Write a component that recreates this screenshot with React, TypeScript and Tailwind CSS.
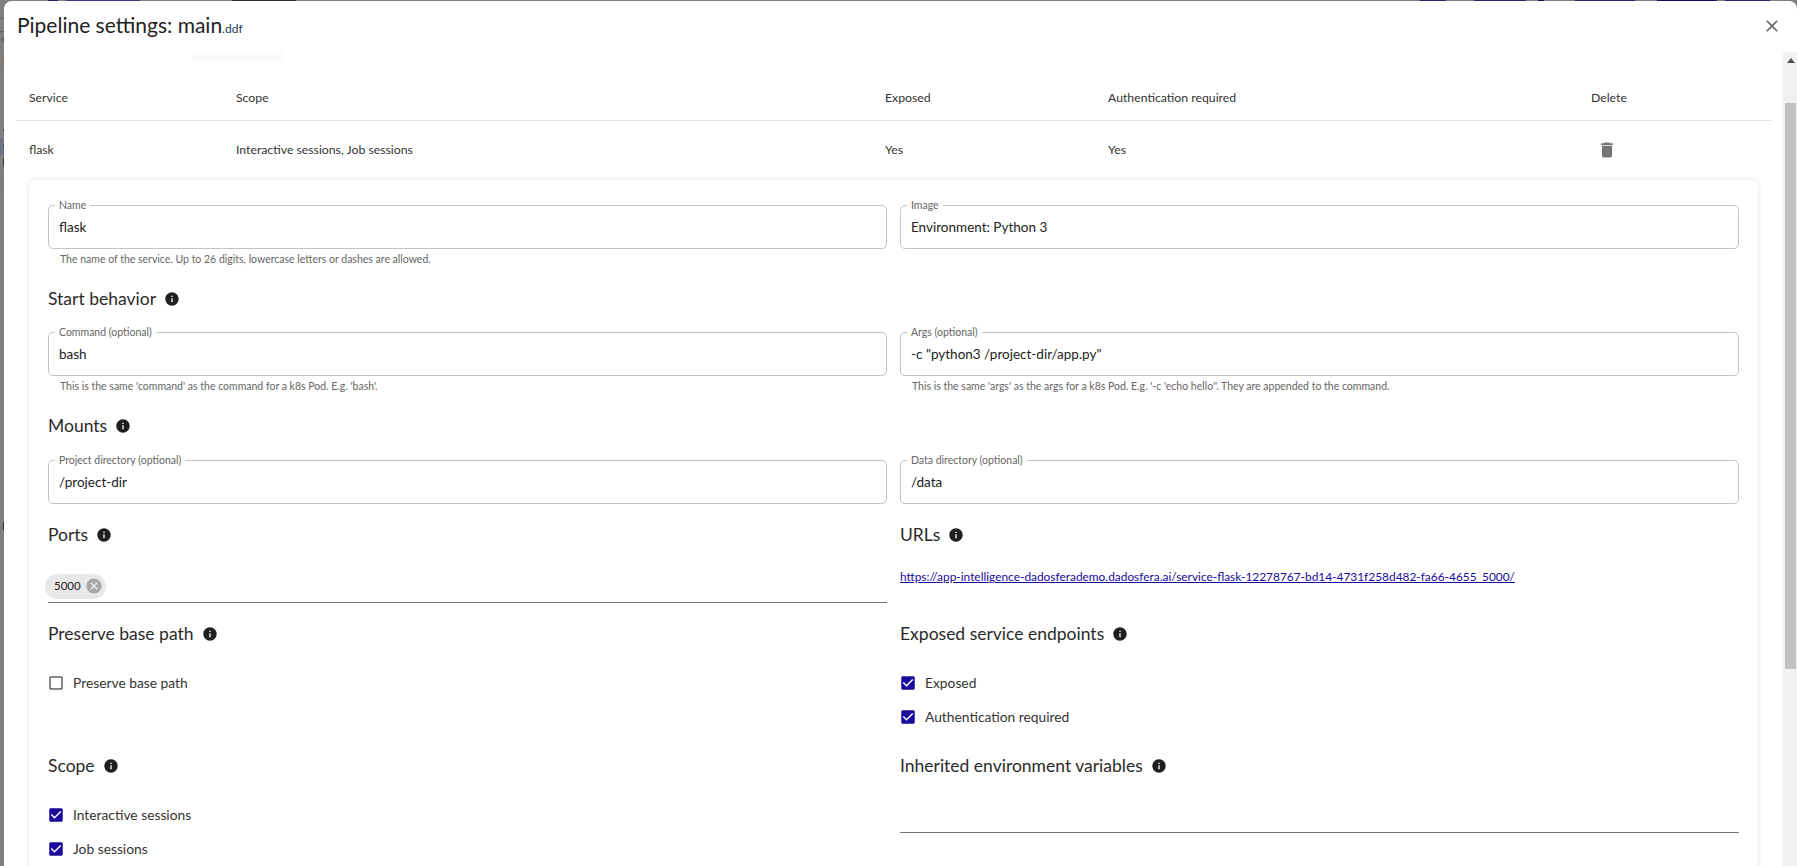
const info = "M12 2C6.48 2 2 6.48 2 12s4.48 10 10 10 10-4.48 10-10S17.52 2 12 2zm1 15h-2v-6h2v6zm0-8h-2V7h2v2z"
const checked = "M19 3H5c-1.11 0-2 .9-2 2v14c0 1.1.89 2 2 2h14c1.1 0 2-.9 2-2V5c0-1.1-.9-2-2-2zm-9 14l-5-5 1.41-1.41L10 14.17l7.59-7.59L19 8l-9 9z"
const blank = "M19 5v14H5V5h14m0-2H5c-1.1 0-2 .9-2 2v14c0 1.1.9 2 2 2h14c1.1 0 2-.9 2-2V5c0-1.1-.9-2-2-2z"

// bits of the page behind the modal that still show round its edge
const behind = [
  { x: 0, y: 18, w: 4, h: 1, c: "#6a6a6a" },
  { x: 0, y: 31, w: 4, h: 1, c: "#5f5f5f" },
  { x: 1, y: 37, w: 3, h: 5, c: "#6a6a6a" },
  { x: 3, y: 58, w: 1, h: 8, c: "#96703f" },
  { x: 3, y: 129, w: 1, h: 2, c: "#3c3c3c" },
  { x: 0, y: 138, w: 4, h: 17, c: "#6f7480" },
  { x: 3, y: 144, w: 1, h: 4, c: "#2f4f7a" },
  { x: 3, y: 158, w: 1, h: 8, c: "#3a3a3a" },
  { x: 3, y: 183, w: 1, h: 2, c: "#8a4a3a" },
  { x: 3, y: 522, w: 1, h: 8, c: "#2a2a2a" },
  { x: 48, y: 0, w: 10, h: 1, c: "#24206e" },
  { x: 66, y: 0, w: 74, h: 1, c: "#3a3a8a" },
  { x: 232, y: 0, w: 64, h: 1, c: "#303030" },
  { x: 1420, y: 0, w: 26, h: 1, c: "#2a2570" },
  { x: 1474, y: 0, w: 52, h: 1, c: "#2a2570" },
  { x: 1538, y: 0, w: 6, h: 1, c: "#14106a" },
  { x: 1575, y: 0, w: 60, h: 1, c: "#2a2570" },
  { x: 1657, y: 0, w: 60, h: 1, c: "#14106a" },
  { x: 1725, y: 0, w: 45, h: 1, c: "#2a2570" },
]

function Field({ label, value, helper }: { label: string; value: string; helper?: string }) {
  return (
    <div>
      <div className="relative flex h-[44px] items-center rounded-[5px] border border-[#c4c4c4] pl-[10px] text-[13.5px] text-[#222]">
        <span className="absolute left-[6px] top-[-7px] bg-white px-[4px] text-[10.5px] leading-[13px] text-[#666]">{label}</span>
        {value}
      </div>
      {helper && <p className="mt-[4px] pl-[12px] text-[10.5px] leading-[13px] text-[#666]">{helper}</p>}
    </div>
  )
}

function Heading({ children, className }: { children: string; className?: string }) {
  return (
    <div className={"flex h-[28px] items-center gap-[8px] text-[17.5px] text-[#2a2a2a] " + (className ?? "")}>
      {children}
      <svg viewBox="0 0 24 24" className="size-[16px] fill-[#1f1f1f]"><path d={info} /></svg>
    </div>
  )
}

function Check({ label, on }: { label: string; on?: boolean }) {
  return (
    <div className="flex h-[34px] items-center text-[13.8px] text-[#333]">
      <svg viewBox="0 0 24 24" className={"ml-[-1px] mr-[8px] size-[18px] " + (on ? "fill-[#1a0a9c]" : "fill-[#666]")}><path d={on ? checked : blank} /></svg>
      {label}
    </div>
  )
}

export default function App() {
  return (
    <div className="relative flex h-[866px] w-[1797px] overflow-hidden bg-[#7f7f7f] pl-[4px] pt-[1px] font-['Lato',sans-serif]">
      {behind.map((b, i) => (
        <div key={i} className="absolute" style={{ left: b.x, top: b.y, width: b.w, height: b.h, background: b.c }} />
      ))}
      <div className="relative flex min-w-0 flex-1 flex-col rounded-t-[8px] bg-white">
        <div className="absolute left-[188px] top-[51px] h-[10px] w-[92px] rounded-[4px] bg-[#fbfbfb]" />
        <div className="flex h-[51px] shrink-0 items-center justify-between pl-[13px] pr-[15px]">
          <h2 className="mb-[4px] text-[21px] text-[#222]">Pipeline settings: main<span className="text-[12px] text-[#1d3a5f]">.ddf</span></h2>
          <svg viewBox="0 0 24 24" className="mb-[1px] size-[20px] fill-[#666]"><path d="M19 6.41 17.59 5 12 10.59 6.41 5 5 6.41 10.59 12 5 17.59 6.41 19 12 13.41 17.59 19 19 17.59 13.41 12z" /></svg>
        </div>
        <div className="flex min-h-0 flex-1">
          <div className="min-w-0 flex-1 overflow-hidden pl-[12px] pr-[12px]">
            <div className="grid h-[69px] grid-cols-[207px_649px_223px_483px_1fr] items-center border-b border-[#e0e0e0] pl-[13px] pt-[25px] text-[12.25px] text-[#333]">
              <span>Service</span>
              <span>Scope</span>
              <span>Exposed</span>
              <span>Authentication required</span>
              <span>Delete</span>
            </div>
            <div className="grid h-[59px] grid-cols-[207px_649px_223px_483px_1fr] items-center pl-[13px] text-[12.25px] text-[#333]">
              <span>flask</span>
              <span>Interactive sessions, Job sessions</span>
              <span>Yes</span>
              <span>Yes</span>
              <svg viewBox="0 0 24 24" className="mb-[2px] ml-[6px] size-[20px] fill-[#757575]"><path d="M6 19c0 1.1.9 2 2 2h8c1.1 0 2-.9 2-2V7H6v12zM19 4h-3.5l-1-1h-5l-1 1H5v2h14V4z" /></svg>
            </div>

            <div className="mx-[13px] h-[700px] rounded-[6px] px-[19px] pt-[25px] shadow-[0_0_5px_rgba(0,0,0,0.12)]">
              <div className="grid h-[80px] grid-cols-2 gap-x-[13px]">
                <Field label="Name" value="flask" helper="The name of the service. Up to 26 digits, lowercase letters or dashes are allowed." />
                <Field label="Image" value="Environment: Python 3" />
              </div>
              <Heading className="mb-[19px]">Start behavior</Heading>
              <div className="grid h-[80px] grid-cols-2 gap-x-[13px]">
                <Field label="Command (optional)" value="bash" helper="This is the same 'command' as the command for a k8s Pod. E.g. 'bash'." />
                <Field label="Args (optional)" value={'-c "python3 /project-dir/app.py"'} helper="This is the same 'args' as the args for a k8s Pod. E.g. '-c 'echo hello''. They are appended to the command." />
              </div>
              <Heading className="mb-[20px]">Mounts</Heading>
              <div className="grid h-[61px] grid-cols-2 gap-x-[13px]">
                <Field label="Project directory (optional)" value="/project-dir" />
                <Field label="Data directory (optional)" value="/data" />
              </div>
              <div className="grid h-[99px] grid-cols-2 gap-x-[13px]">
                <div>
                  <Heading>Ports</Heading>
                  <div className="mt-[23px] h-[31px] border-b border-[#757575]">
                    <span className="ml-[-3px] inline-flex h-[25px] w-[61px] items-center justify-between rounded-full bg-[#e8e8e8] pb-[1px] pl-[9px] pr-[3px] text-[11.5px] text-[#222]">
                      5000
                      <svg viewBox="0 0 24 24" className="size-[18px] fill-[#a8a8a8]"><path d="M12 2C6.47 2 2 6.47 2 12s4.47 10 10 10 10-4.47 10-10S17.53 2 12 2zm5 13.59L15.59 17 12 13.41 8.41 17 7 15.59 10.59 12 7 8.41 8.41 7 12 10.59 15.59 7 17 8.41 13.41 12 17 15.59z" /></svg>
                    </span>
                  </div>
                </div>
                <div>
                  <Heading>URLs</Heading>
                  <a href="#" className="mt-[19px] block text-[11.9px] text-[#1a0a9c] underline">https://app-intelligence-dadosferademo.dadosfera.ai/service-flask-12278767-bd14-4731f258d482-fa66-4655_5000/</a>
                </div>
              </div>
              <div className="grid h-[132px] grid-cols-2 gap-x-[13px]">
                <div>
                  <Heading className="mb-[18px]">Preserve base path</Heading>
                  <Check label="Preserve base path" />
                </div>
                <div>
                  <Heading className="mb-[18px]">Exposed service endpoints</Heading>
                  <Check label="Exposed" on />
                  <Check label="Authentication required" on />
                </div>
              </div>
              <div className="grid grid-cols-2 gap-x-[13px]">
                <div>
                  <Heading className="mb-[18px]">Scope</Heading>
                  <Check label="Interactive sessions" on />
                  <Check label="Job sessions" on />
                </div>
                <div>
                  <Heading>Inherited environment variables</Heading>
                  <div className="h-[53px] border-b border-[#757575]" />
                </div>
              </div>
            </div>
          </div>
          <div className="w-[14px] shrink-0 bg-[#f1f1f1] pl-[2px] pr-[1px]">
            <div className="flex h-[17px] items-center justify-center">
              <div className="size-0 border-x-[4px] border-b-[5px] border-x-transparent border-b-[#505050]" />
            </div>
            <div className="mt-[34px] h-[566px] bg-[#c1c1c1]" />
          </div>
        </div>
      </div>
    </div>
  )
}
